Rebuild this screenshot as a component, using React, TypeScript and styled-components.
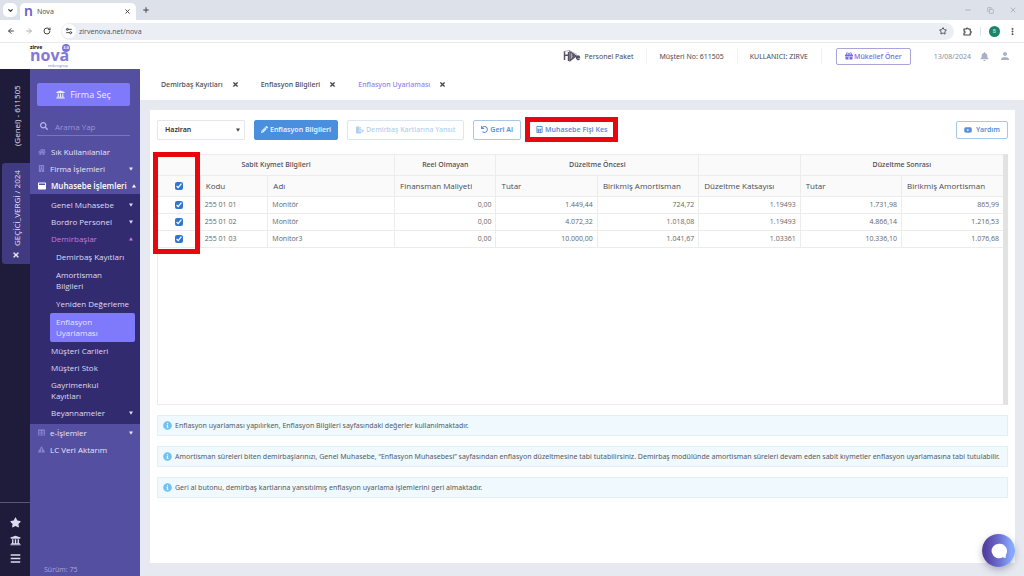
import React, { useState } from 'react';
import styled, { createGlobalStyle, css } from 'styled-components';
import {
  FaBars, FaBell, FaBuilding, FaCalculator, FaFileExport, FaGift,
  FaHome, FaInfoCircle, FaPencilAlt, FaSearch, FaStar, FaTable, FaTimes,
  FaUndo, FaUniversity, FaWindowMaximize, FaYoutube, FaExclamationTriangle,
} from 'react-icons/fa';
import { MdPerson } from 'react-icons/md';
import {
  ArrowLeft, ArrowRight, ChevronDown, Copy, EllipsisVertical, Minus, Plus, RotateCw,
  Settings2, Star, X,
} from 'lucide-react';

const GlobalStyle = createGlobalStyle`
  *, *::before, *::after { box-sizing: border-box; }
  body {
    margin: 0;
    font-family: "Noto Sans", "Open Sans", sans-serif;
    font-size: 7px;
    line-height: 11px;
    color: #4a4a55;
    background: #e7e9f1;
  }
  button, input, select { font: inherit; color: inherit; }
  button { cursor: pointer; }
  svg { display: block; flex: none; }
`;

const Page = styled.div`
  min-height: 100vh;
  display: flex;
  flex-direction: column;
`;

const openSans = css`
  font-family: "Open Sans", "Noto Sans", sans-serif;
`;

/* Browser chrome */

const TabStrip = styled.div`
  height: 20px;
  display: flex;
  align-items: center;
  padding: 0 5px 0 3px;
  background: #dde1e9;
`;

const PlainButton = styled.button<{ $color?: string }>`
  border: 0;
  padding: 0;
  background: none;
  display: flex;
  align-items: center;
  justify-content: center;
  color: ${(p) => p.$color ?? 'inherit'};
`;

const TabListButton = styled(PlainButton)`
  width: 14px;
  height: 14px;
  border-radius: 5px;
  background: #fff;
  color: #333;
`;

const BrowserTab = styled.div`
  width: 116px;
  height: 17px;
  margin: 3px 6px 0 3px;
  padding: 0 5px 0 4px;
  display: flex;
  align-items: center;
  gap: 4px;
  background: #fff;
  border-radius: 5px 5px 0 0;
  color: #555;
`;

const Favicon = styled.span`
  color: #6a5fd0;
  font-size: 14px;
  line-height: 14px;
  font-weight: 600;
  padding-bottom: 2px;
`;

const Grow = styled.span`
  flex: 1;
`;

const WindowControls = styled.div`
  margin-left: auto;
  display: flex;
  gap: 15px;
  padding-right: 2px;
  color: #9a9ea8;
`;

const AddressBar = styled.div`
  height: 23px;
  display: flex;
  align-items: center;
  padding: 0 7px;
  background: #fff;
  border-bottom: 1px solid #e9eaf0;
`;

const NavButtons = styled.div`
  display: flex;
  gap: 10px;
  margin-right: 10px;
`;

const UrlField = styled.label`
  flex: 1;
  height: 17px;
  display: flex;
  align-items: center;
  gap: 3px;
  padding: 0 7px 0 1px;
  border-radius: 9px;
  background: #eceef6;
`;

const SiteInfo = styled.span`
  width: 14px;
  height: 14px;
  border-radius: 50%;
  background: #fff;
  display: flex;
  align-items: center;
  justify-content: center;
`;

const UrlInput = styled.input`
  flex: 1;
  min-width: 0;
  border: 0;
  padding: 0;
  background: none;
  outline: none;
  color: #555a63;
`;

const BrowserActions = styled.div`
  display: flex;
  align-items: center;
  gap: 8px;
  margin-left: 9px;
  color: #444;
`;

const ProfileDivider = styled.span`
  width: 1px;
  height: 9px;
  background: #dfe1ea;
`;

const Avatar = styled.span`
  width: 11px;
  height: 11px;
  border-radius: 50%;
  background: #1c8468;
  color: #cdeee4;
  font-size: 5px;
  line-height: 11px;
  text-align: center;
`;

/* Application header */

const Header = styled.header`
  height: 26px;
  display: flex;
  align-items: center;
  padding: 0 13px 0 30px;
  background: #fff;
`;

const Logo = styled.a`
  position: relative;
  width: 42px;
  height: 24px;
  text-decoration: none;
  color: #8377d8;
`;

const LogoTop = styled.span`
  position: absolute;
  top: 0;
  left: 0;
  font-size: 5px;
  line-height: 6px;
  font-weight: 800;
  color: #222;
`;

const LogoName = styled.span`
  ${openSans}
  position: absolute;
  top: 2px;
  left: 0;
  font-size: 16px;
  line-height: 18px;
  font-weight: 700;
`;

const LogoBadge = styled.span`
  position: absolute;
  top: 0;
  left: 32px;
  width: 8px;
  height: 8px;
  border-radius: 50%;
  background: #7b6fd8;
  color: #fff;
  font-size: 4px;
  line-height: 8px;
  font-weight: 700;
  text-align: center;
`;

const LogoGroup = styled.span`
  position: absolute;
  top: 19px;
  left: 18px;
  font-size: 4px;
  line-height: 5px;
`;

const HeaderInfo = styled.div`
  margin-left: auto;
  height: 16px;
  display: flex;
  align-items: center;
`;

const HeaderItem = styled.span`
  height: 16px;
  display: flex;
  align-items: center;
  gap: 4px;
  padding: 0 13px 0 12px;
  border-right: 1px solid #f1f1f6;
`;

const ReferButton = styled(PlainButton)`
  height: 17px;
  margin: 0 23px 0 14px;
  padding: 0 8px;
  gap: 1px;
  border: 1px solid #a9a4dc;
  border-radius: 2px;
  background: #fff;
  color: #7469e8;
  font-weight: 500;
`;

const HeaderIcons = styled.div`
  display: flex;
  gap: 10px;
  margin-left: 9px;
  color: #a9b1c6;
`;

const DateText = styled.span`
  color: #8d8d96;
`;

/* Left rail */

const Body = styled.div`
  flex: 1;
  display: flex;
`;

const Rail = styled.aside`
  width: 30px;
  display: flex;
  flex-direction: column;
  background: #1f1b3b;
  color: #dcdcf0;
`;

const RailTab = styled.button`
  ${openSans}
  writing-mode: vertical-rl;
  transform: rotate(180deg);
  width: 28px;
  height: 94px;
  margin-left: 2px;
  border: 0;
  padding: 0;
  display: flex;
  align-items: center;
  justify-content: center;
  gap: 5px;
  background: none;
  color: #e4e4f4;
  font-size: 8px;
  font-weight: 500;
`;

const ActiveRailTab = styled(RailTab)`
  height: 101px;
  justify-content: flex-start;
  padding-top: 5px;
  border-radius: 0 3px 3px 0;
  background: #403a80;
`;

const RailActions = styled.div`
  margin-top: auto;
  height: 74px;
  padding-top: 14px;
  display: flex;
  flex-direction: column;
  align-items: center;
  gap: 7px;
  border-top: 1px solid #5a5772;
`;

/* Sidebar */

const Sidebar = styled.nav`
  ${openSans}
  width: 110px;
  display: flex;
  flex-direction: column;
  background: #544fa0;
  color: #e6e5f8;
  font-size: 8px;
  font-weight: 500;
`;

const FirmButton = styled(PlainButton)`
  height: 23px;
  margin: 14px 10px 0 7px;
  gap: 5px;
  border-radius: 2px;
  background: #7f79fb;
  color: #eeedff;
  font-size: 9px;
  font-weight: 500;
`;

const SearchBox = styled.label`
  height: 18px;
  margin: 12px 10px 7px 7px;
  padding: 0 3px 1px;
  display: flex;
  align-items: center;
  gap: 7px;
  border-bottom: 1px solid #7a76bb;
  color: #b8b5e8;
`;

const SearchInput = styled.input`
  width: 100%;
  border: 0;
  padding: 0;
  background: none;
  outline: none;
  line-height: 11px;
  &::placeholder { color: #9894dc; opacity: 1; }
`;

const MenuItem = styled.a<{ $strong?: boolean }>`
  min-height: 17px;
  padding: 3px 7px 3px 8px;
  display: flex;
  align-items: center;
  gap: 5px;
  text-decoration: none;
  color: ${(p) => (p.$strong ? '#ffffff' : '#e6e5f8')};
  font-weight: ${(p) => (p.$strong ? 600 : 500)};
  white-space: nowrap;
`;

const MenuIcon = styled.span<{ $strong?: boolean }>`
  color: ${(p) => (p.$strong ? '#ffffff' : '#8782d0')};
`;

const CaretBox = styled.span`
  margin-left: auto;
`;

const SubMenu = styled.div`
  padding: 2px 0 3px;
  background: #332b70;
`;

const SubItem = styled(MenuItem)<{ $open?: boolean }>`
  padding-left: 21px;
  color: ${(p) => (p.$open ? '#c07ae0' : '#dedcf2')};
`;

const SubLabel = styled.span`
  max-width: 60px;
  white-space: normal;
`;

const LeafGroup = styled.div`
  padding-top: 1px;
`;

const LeafItem = styled.a<{ $active?: boolean }>`
  margin: 0 5px 0 20px;
  min-height: 18px;
  padding: 3px 6px 4px;
  display: block;
  border-radius: 2px;
  text-decoration: none;
  color: ${(p) => (p.$active ? '#e8e6ff' : '#dedcf2')};
  background: ${(p) => (p.$active ? '#7f79fb' : 'none')};
`;

const LeafLabel = styled.span<{ $narrow?: boolean }>`
  display: block;
  max-width: ${(p) => (p.$narrow ? '60px' : 'none')};
  white-space: ${(p) => (p.$narrow ? 'normal' : 'nowrap')};
`;

const Version = styled.small`
  margin: auto 0 1px 14px;
  font-size: 7px;
  color: #aaa6dd;
`;

/* Workspace */

const Main = styled.main`
  flex: 1;
  min-width: 0;
  display: flex;
  flex-direction: column;
`;

const PageTabs = styled.div`
  height: 31px;
  display: flex;
  align-items: center;
  gap: 22px;
  padding: 0 21px;
  background: #fff;
  font-weight: 500;
`;

const PageTab = styled.div<{ $active?: boolean }>`
  display: flex;
  align-items: center;
  gap: 9px;
  color: ${(p) => (p.$active ? '#8d84ee' : '#4a4a55')};
`;

const Card = styled.section`
  flex: 1;
  display: flex;
  flex-direction: column;
  margin: 10px 9px 13px 10px;
  padding: 7px 7px 14px;
  background: #fff;
`;

const Toolbar = styled.div`
  height: 25px;
  display: flex;
  align-items: center;
  gap: 9px;
  margin-bottom: 12px;
`;

const SelectWrap = styled.div`
  position: relative;
  width: 88px;
`;

const PeriodSelect = styled.select`
  appearance: none;
  width: 100%;
  height: 20px;
  padding: 0 7px;
  border: 1px solid #e6e6ec;
  border-radius: 1px;
  background: #fff;
  color: #333;
  font-weight: 600;
`;

const SelectCaret = styled.span`
  position: absolute;
  top: 8px;
  right: 5px;
  pointer-events: none;
  color: #444;
`;

const ActionButton = styled(PlainButton)<{ $kind?: 'solid' | 'faded' }>`
  height: 20px;
  padding: 0 ${(p) => (p.$kind === 'solid' ? 6 : p.$kind === 'faded' ? 8 : 7)}px;
  gap: 2px;
  border: 1px solid ${(p) => (p.$kind === 'solid' ? '#4a8fdd' : p.$kind === 'faded' ? '#d8e6f5' : '#a9c8e8')};
  border-radius: 2px;
  background: ${(p) => (p.$kind === 'solid' ? '#4a8fdd' : '#fff')};
  color: ${(p) => (p.$kind === 'solid' ? '#e8f2ff' : p.$kind === 'faded' ? '#b4cfee' : '#5b8fd6')};
  font-weight: ${(p) => (p.$kind === 'faded' ? 500 : 600)};
  white-space: nowrap;
`;

const MarkedButton = styled(ActionButton)`
  height: 25px;
  margin-left: -5px;
  padding: 0 6px;
  border: 5px solid #e8070c;
  border-radius: 0;
`;

const HelpButton = styled(ActionButton)`
  height: 18px;
  margin-left: auto;
  gap: 4px;
`;

const GridArea = styled.div`
  position: relative;
  height: 251px;
  margin-bottom: 10px;
  border: 1px solid #ececec;
  border-right: 5px solid #e2e2e2;
`;

const Grid = styled.table`
  ${openSans}
  width: 100%;
  table-layout: fixed;
  border-collapse: collapse;
  th, td {
    border-right: 1px solid #ececec;
    border-bottom: 1px solid #ececec;
    white-space: nowrap;
  }
  tr > :last-child { border-right: 0; }
`;

const GroupHead = styled.th`
  height: 20px;
  padding: 0;
  background: #fafafa;
  font-family: "Noto Sans", "Open Sans", sans-serif;
  font-weight: 500;
  text-align: center;
`;

const Head = styled.th`
  height: 21px;
  padding: 0 0 0 5px;
  background: #fafafa;
  font-size: 8px;
  font-weight: 500;
  text-align: left;
`;

const Cell = styled.td<{ $align?: 'right' }>`
  height: 17px;
  padding: 0 4px;
  color: #666;
  text-align: ${(p) => p.$align ?? 'left'};
`;

const CheckHead = styled(Head)`
  padding: 0;
  text-align: center;
`;

const CheckCell = styled(Cell)`
  padding: 0;
  text-align: center;
`;

const Check = styled.input`
  width: 8px;
  height: 8px;
  display: block;
  margin: 0 auto;
  accent-color: #2f76d2;
`;

const ColumnMark = styled.div`
  position: absolute;
  top: -3px;
  left: -5px;
  width: 47px;
  height: 102px;
  border: 5px solid #e8070c;
  pointer-events: none;
`;

const Notes = styled.div`
  display: flex;
  flex-direction: column;
  gap: 10px;
`;

const Note = styled.p`
  margin: 0;
  min-height: 21px;
  padding: 4px 5px;
  display: flex;
  align-items: center;
  gap: 3px;
  border: 1px solid #e0f0f7;
  background: #f0f9fe;
  color: #555a60;
  svg { color: #6fc3ee; }
`;

const ChatButton = styled.button`
  position: fixed;
  right: 9px;
  bottom: 9px;
  width: 33px;
  height: 33px;
  padding: 0;
  border: 0;
  border-radius: 50%;
  display: flex;
  align-items: center;
  justify-content: center;
  background: linear-gradient(90deg, #5440a0 10%, #6a6cce 50%, #86aaff 90%);
  box-shadow: 0 3px 7px rgba(60, 60, 90, 0.35);
`;

const records = [
  { code: '255 01 01', name: 'Monitör', values: ['0,00', '1.449,44', '724,72', '1.19493', '1.731,98', '865,99'] },
  { code: '255 01 02', name: 'Monitör', values: ['0,00', '4.072,32', '1.018,08', '1.19493', '4.866,14', '1.216,53'] },
  { code: '255 01 03', name: 'Monitor3', values: ['0,00', '10.000,00', '1.041,67', '1.03361', '10.336,10', '1.076,68'] },
];

const heads = ['Kodu', 'Adı', 'Finansman Maliyeti', 'Tutar', 'Birikmiş Amortisman', 'Düzeltme Katsayısı', 'Tutar', 'Birikmiş Amortisman'];
const columnWidths = ['5%', '8%', '15%', '12%', '12%', '12%', '12%', '12%', '12%'];

const notes = [
  'Enflasyon uyarlaması yapılırken, Enflasyon Bilgileri sayfasındaki değerler kullanılmaktadır.',
  'Amortisman süreleri biten demirbaşlarınızı, Genel Muhasebe, “Enflasyon Muhasebesi” sayfasından enflasyon düzeltmesine tabi tutabilirsiniz. Demirbaş modülünde amortisman süreleri devam eden sabit kıymetler enflasyon uyarlamasına tabi tutulabilir.',
  'Geri al butonu, demirbaş kartlarına yansıtılmış enflasyon uyarlama işlemlerini geri almaktadır.',
];

const leaves = [
  { label: 'Demirbaş Kayıtları' },
  { label: 'Amortisman Bilgileri', narrow: true },
  { label: 'Yeniden Değerleme' },
  { label: 'Enflasyon Uyarlaması', narrow: true, active: true },
];

const Triangle = ({ up }: { up?: boolean }) => (
  <svg width="4" height="4" viewBox="0 0 4 4" fill="currentColor">
    <path d={up ? 'M0 3.5h4L2 .3z' : 'M0 .5h4L2 3.7z'} />
  </svg>
);

const Caret = ({ up }: { up?: boolean }) => <CaretBox><Triangle up={up} /></CaretBox>;

const PuzzleMark = () => (
  <svg width="9" height="9" viewBox="0 0 9 9" fill="none" stroke="#444" strokeWidth="1.2" strokeLinejoin="round">
    <path d="M1 2h2.2a1 1 0 0 1 2 0h2v2a1 1 0 0 1 0 2v2H1V6.2a1.1 1.1 0 0 0 0-2.2z" />
  </svg>
);

const PackageMark = () => (
  <svg width="18" height="12" viewBox="0 0 18 12" fill="none" stroke="#55505f" strokeWidth="1.4">
    <path d="M1.500 1v9M1.500 5.500l3.500-.5M5.500 2v9" />
    <path d="M7 1.500l6 4.500-6 4.500z" fill="#b9b3c8" />
    <path d="M9 4.500l2 1.500-2 1.500M13.500 7.500h3c0-2-3-2-3 0s2 2.500 3 1.500" />
    <path d="M1 1.500l5-1 8 4" stroke="#a49cc0" strokeWidth=".8" />
  </svg>
);

const ChatMark = () => (
  <svg width="16" height="16" viewBox="0 0 16 16" fill="#fff">
    <path d="M8 .7a7.3 7.3 0 1 0 3.600 13.600l3 .8.3-3.400A7.3 7.3 0 0 0 8 .7z" />
  </svg>
);

export default function App() {
  const [checked, setChecked] = useState(records.map(() => true));
  const toggle = (i: number) => setChecked((c) => c.map((v, n) => (n === i ? !v : v)));
  const all = checked.every(Boolean);

  return (
    <Page>
      <GlobalStyle />
      <TabStrip>
        <TabListButton aria-label="Sekmeler"><ChevronDown size={7} strokeWidth={4} /></TabListButton>
        <BrowserTab>
          <Favicon>n</Favicon>
          <span>Nova</span>
          <Grow />
          <PlainButton aria-label="Sekmeyi kapat" $color="#333"><X size={7} strokeWidth={3} /></PlainButton>
        </BrowserTab>
        <PlainButton aria-label="Yeni sekme" $color="#444"><Plus size={8} strokeWidth={3} /></PlainButton>
        <WindowControls>
          <PlainButton aria-label="Simge durumu"><Minus size={8} /></PlainButton>
          <PlainButton aria-label="Geri yükle"><Copy size={7} /></PlainButton>
          <PlainButton aria-label="Kapat"><X size={8} /></PlainButton>
        </WindowControls>
      </TabStrip>
      <AddressBar>
        <NavButtons>
          <PlainButton aria-label="Geri" $color="#444"><ArrowLeft size={8} strokeWidth={3} /></PlainButton>
          <PlainButton aria-label="İleri" $color="#b0b0b8"><ArrowRight size={8} strokeWidth={3} /></PlainButton>
          <PlainButton aria-label="Yenile" $color="#444"><RotateCw size={8} strokeWidth={3} /></PlainButton>
        </NavButtons>
        <UrlField>
          <SiteInfo><Settings2 size={8} strokeWidth={3} /></SiteInfo>
          <UrlInput aria-label="Adres" defaultValue="zirvenova.net/nova" />
          <Star size={8} strokeWidth={3} />
        </UrlField>
        <BrowserActions>
          <PlainButton aria-label="Uzantılar"><PuzzleMark /></PlainButton>
          <ProfileDivider />
          <Avatar>B</Avatar>
          <PlainButton aria-label="Menü"><EllipsisVertical size={9} strokeWidth={3} /></PlainButton>
        </BrowserActions>
      </AddressBar>
      <Header>
        <Logo href="#">
          <LogoName>nova</LogoName>
          <LogoTop>zirve</LogoTop>
          <LogoBadge>3.0</LogoBadge>
          <LogoGroup>mikrogrup</LogoGroup>
        </Logo>
        <HeaderInfo>
          <HeaderItem><PackageMark />Personel Paket</HeaderItem>
          <HeaderItem>Müşteri No: 611505</HeaderItem>
          <HeaderItem>KULLANICI: ZIRVE</HeaderItem>
          <ReferButton><FaGift size={8} />Mükellef Öner</ReferButton>
          <DateText>13/08/2024</DateText>
          <HeaderIcons>
            <PlainButton aria-label="Bildirimler"><FaBell size={9} /></PlainButton>
            <PlainButton aria-label="Hesap"><MdPerson size={12} /></PlainButton>
          </HeaderIcons>
        </HeaderInfo>
      </Header>
      <Body>
        <Rail>
          <RailTab>(Genel) - 611505</RailTab>
          <ActiveRailTab><FaTimes size={8} />GEÇİCİ_VERGİ / 2024</ActiveRailTab>
          <RailActions>
            <PlainButton aria-label="Favoriler"><FaStar size={11} /></PlainButton>
            <PlainButton aria-label="Firmalar"><FaUniversity size={11} /></PlainButton>
            <PlainButton aria-label="Menü"><FaBars size={11} /></PlainButton>
          </RailActions>
        </Rail>
        <Sidebar>
          <FirmButton><FaUniversity size={9} />Firma Seç</FirmButton>
          <SearchBox>
            <FaSearch size={8} />
            <SearchInput aria-label="Arama" placeholder="Arama Yap" />
          </SearchBox>
          <MenuItem href="#"><MenuIcon><FaHome size={8} /></MenuIcon>Sık Kullanılanlar</MenuItem>
          <MenuItem href="#"><MenuIcon><FaBuilding size={7} /></MenuIcon>Firma İşlemleri<Caret /></MenuItem>
          <MenuItem href="#" $strong><MenuIcon $strong><FaWindowMaximize size={8} /></MenuIcon>Muhasebe İşlemleri<Caret up /></MenuItem>
          <SubMenu>
            <SubItem href="#">Genel Muhasebe<Caret /></SubItem>
            <SubItem href="#">Bordro Personel<Caret /></SubItem>
            <SubItem href="#" $open>Demirbaşlar<Caret up /></SubItem>
            <LeafGroup>
              {leaves.map((l) => (
                <LeafItem key={l.label} href="#" $active={l.active}>
                  <LeafLabel $narrow={l.narrow}>{l.label}</LeafLabel>
                </LeafItem>
              ))}
            </LeafGroup>
            <SubItem href="#">Müşteri Carileri</SubItem>
            <SubItem href="#">Müşteri Stok</SubItem>
            <SubItem href="#"><SubLabel>Gayrimenkul Kayıtları</SubLabel></SubItem>
            <SubItem href="#">Beyannameler<Caret /></SubItem>
          </SubMenu>
          <MenuItem href="#"><MenuIcon><FaTable size={7} /></MenuIcon>e-İşlemler<Caret /></MenuItem>
          <MenuItem href="#"><MenuIcon><FaExclamationTriangle size={7} /></MenuIcon>LC Veri Aktarım</MenuItem>
          <Version>Sürüm: 75</Version>
        </Sidebar>
        <Main>
          <PageTabs>
            {['Demirbaş Kayıtları', 'Enflasyon Bilgileri', 'Enflasyon Uyarlaması'].map((t, i) => (
              <PageTab key={t} $active={i === 2}>
                {t}
                <PlainButton aria-label={`${t} kapat`} $color="#444"><FaTimes size={7} /></PlainButton>
              </PageTab>
            ))}
          </PageTabs>
          <Card>
            <Toolbar>
              <SelectWrap>
                <PeriodSelect aria-label="Dönem" defaultValue="Haziran">
                  <option>Haziran</option>
                </PeriodSelect>
                <SelectCaret><Triangle /></SelectCaret>
              </SelectWrap>
              <ActionButton $kind="solid"><FaPencilAlt size={7} />Enflasyon Bilgileri</ActionButton>
              <ActionButton $kind="faded"><FaFileExport size={8} />Demirbaş Kartlarına Yansıt</ActionButton>
              <ActionButton><FaUndo size={7} />Geri Al</ActionButton>
              <MarkedButton><FaCalculator size={7} />Muhasebe Fişi Kes</MarkedButton>
              <HelpButton><FaYoutube size={8} />Yardım</HelpButton>
            </Toolbar>
            <GridArea>
              <Grid>
                <colgroup>
                  {columnWidths.map((w, i) => <col key={i} width={w} />)}
                </colgroup>
                <thead>
                  <tr>
                    <GroupHead colSpan={3}>Sabit Kıymet Bilgileri</GroupHead>
                    <GroupHead>Reel Olmayan</GroupHead>
                    <GroupHead colSpan={2}>Düzeltme Öncesi</GroupHead>
                    <GroupHead />
                    <GroupHead colSpan={2}>Düzeltme Sonrası</GroupHead>
                  </tr>
                  <tr>
                    <CheckHead>
                      <Check type="checkbox" aria-label="Tümünü seç" checked={all} onChange={() => setChecked(records.map(() => !all))} />
                    </CheckHead>
                    {heads.map((h, i) => <Head key={i}>{h}</Head>)}
                  </tr>
                </thead>
                <tbody>
                  {records.map((r, i) => (
                    <tr key={r.code}>
                      <CheckCell>
                        <Check type="checkbox" aria-label={r.code} checked={checked[i]} onChange={() => toggle(i)} />
                      </CheckCell>
                      <Cell>{r.code}</Cell>
                      <Cell>{r.name}</Cell>
                      {r.values.map((v, n) => <Cell key={n} $align="right">{v}</Cell>)}
                    </tr>
                  ))}
                </tbody>
              </Grid>
              <ColumnMark />
            </GridArea>
            <Notes>
              {notes.map((n) => <Note key={n}><FaInfoCircle size={9} />{n}</Note>)}
            </Notes>
          </Card>
        </Main>
      </Body>
      <ChatButton aria-label="Destek"><ChatMark /></ChatButton>
    </Page>
  );
}
